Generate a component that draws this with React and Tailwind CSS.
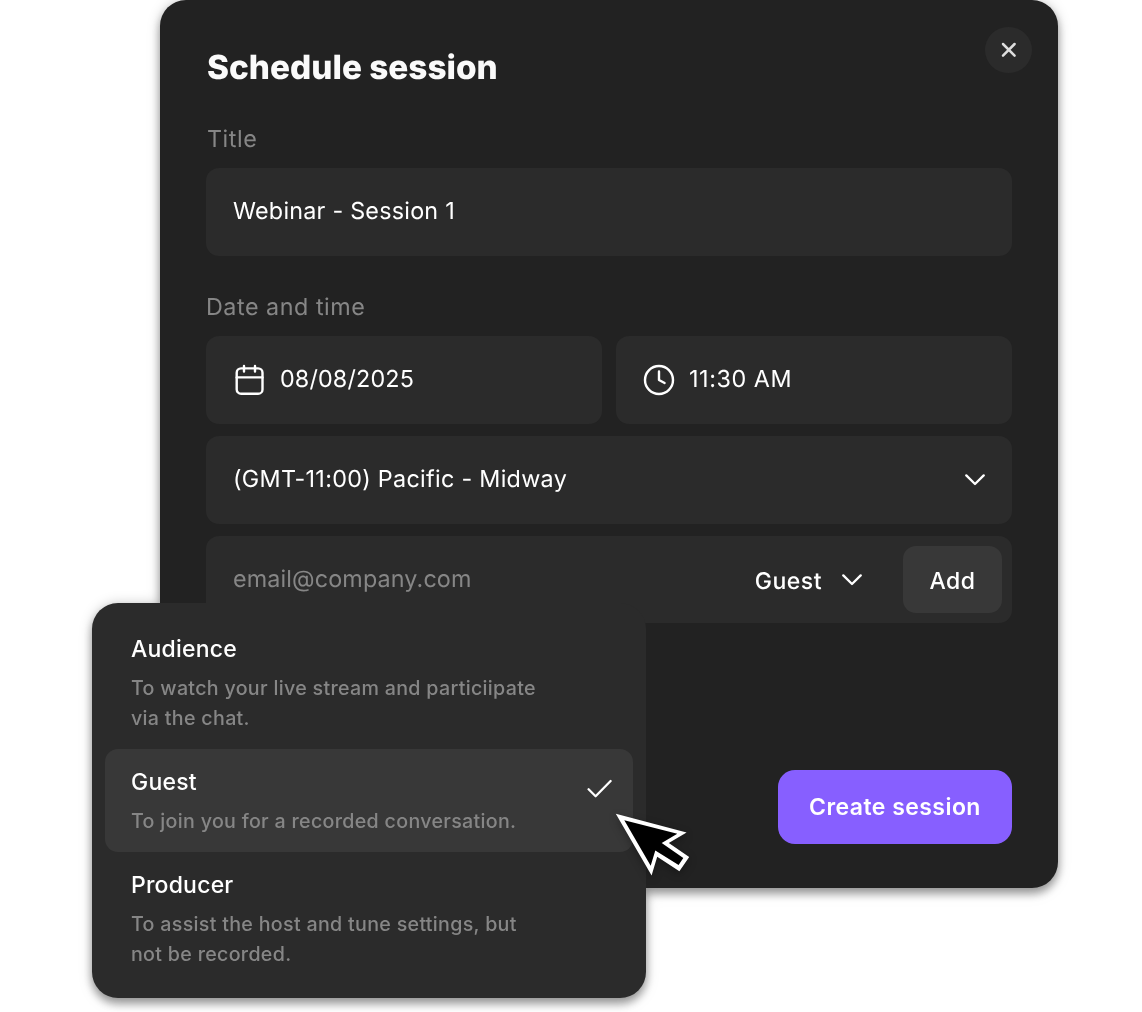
import React, { useState } from 'react'

const ROLES = [
  { name: 'Audience', lines: ['To watch your live stream and particiipate', 'via the chat.'] },
  { name: 'Guest', lines: ['To join you for a recorded conversation.'] },
  { name: 'Producer', lines: ['To assist the host and tune settings, but', 'not be recorded.'] },
]

function CloseIcon() {
  return (
    <svg width="16" height="16" viewBox="0 0 16 16" fill="none" stroke="#dedede" strokeWidth="2.5" strokeLinecap="round">
      <path d="M2 2 13.6 13.6M13.6 2 2 13.6" />
    </svg>
  )
}

function CalendarIcon() {
  return (
    <svg width="30" height="32" viewBox="0 0 30 32" fill="none" stroke="#fff" strokeWidth="2.4" strokeLinecap="round">
      <rect x="1.7" y="4.4" width="25.8" height="25.4" rx="4.4" />
      <path d="M1.7 13.4H27.5M9 2V7.6M20 2V7.6" />
    </svg>
  )
}

function ClockIcon() {
  return (
    <svg width="32" height="32" viewBox="0 0 32 32" fill="none" stroke="#fff" strokeWidth="2.4" strokeLinecap="round" strokeLinejoin="round">
      <circle cx="16" cy="16" r="14" />
      <path d="M16 7.4V16L21.6 19" />
    </svg>
  )
}

function ChevronIcon() {
  return (
    <svg width="20" height="12" viewBox="0 0 20 12" fill="none" stroke="#fff" strokeWidth="2.3" strokeLinecap="round" strokeLinejoin="round">
      <path d="M1.3 1.4 10 10 18.7 1.4" />
    </svg>
  )
}

function CheckIcon() {
  return (
    <svg width="26" height="20" viewBox="0 0 26 20" fill="none" stroke="#fff" strokeWidth="2.3" strokeLinecap="round" strokeLinejoin="round">
      <path d="M1.6 10.3 8.6 17.2 23.6 2" />
    </svg>
  )
}

function Cursor() {
  return (
    <svg className="absolute left-[610px] top-[808px] drop-shadow-[0_3px_4px_rgba(0,0,0,0.3)]" width="84" height="74" viewBox="0 0 84 74">
      <path fill="#fff" d="M5.8 5.8 76.6 24.6 58.8 35 79.2 49 69.4 63.2 47.2 48.8 41.6 67.6Z" />
      <path fill="#000" d="M14.3 12.3 67.3 25.7 51.7 35 73.3 50 68.6 57 45.3 42.4 40.7 57.8Z" />
    </svg>
  )
}

function Menu({ value, onSelect }) {
  return (
    <div className="absolute left-[92px] top-[603px] w-[554px] rounded-[26px] bg-[#2b2b2b] p-[13px]">
      {ROLES.map(role => (
        <button
          key={role.name}
          onClick={() => onSelect(role.name)}
          className={`flex w-full items-start justify-between rounded-[13px] pt-[17px] pr-5 pb-4 pl-[26px] text-left ${role.name === value ? 'bg-[#383838]' : ''}`}
        >
          <span>
            <span className="block text-[23px] leading-[32px] font-medium tracking-[0.2px] text-white">{role.name}</span>
            <span className="mt-2 block text-[19.67px] leading-[30px] font-[450] tracking-[0.3px] text-[#868686]">
              {role.lines.map(line => (
                <span key={line} className="block whitespace-nowrap">{line}</span>
              ))}
            </span>
          </span>
          {role.name === value && <span className="mt-[13px]"><CheckIcon /></span>}
        </button>
      ))}
    </div>
  )
}

export default function App() {
  const [role, setRole] = useState('Guest')

  return (
    <div className="relative h-[1012px] w-[1142px] overflow-hidden bg-white font-['Inter',sans-serif] text-[23.33px] leading-[33px] text-white [font-optical-sizing:none] [text-rendering:geometricPrecision]">
      {/* Modal and menu share one shadow */}
      <div className="h-full [filter:drop-shadow(0_6px_4px_rgba(0,0,0,0.32))_drop-shadow(0_0_6px_rgba(0,0,0,0.2))]">
        <div className="ml-[160px] flex h-[887.5px] w-[898px] flex-col rounded-[26px] bg-[#222] px-[46px]">
          {/* Header */}
          <div className="flex items-start justify-between pt-[27px]">
            <h1 className="mt-[18px] ml-px text-[33.33px] leading-[46px] font-[760] text-[#fafafa]">Schedule session</h1>
            <button className="-mr-5 flex h-[46px] w-[47px] items-center justify-center rounded-full bg-[#2b2b2b]">
              <CloseIcon />
            </button>
          </div>

          {/* Title */}
          <label className="mt-[31px] ml-px text-[23.33px] font-[420] tracking-[0.55px] text-[#868686]">Title</label>
          <div className="mt-[13px] flex h-[88px] items-center rounded-[13px] bg-[#2b2b2b] px-[27px] pb-[3px] font-[390] tracking-[0.23px]">
            Webinar - Session 1
          </div>

          {/* Date and time */}
          <label className="mt-[34px] text-[23.33px] font-[420] tracking-[0.52px] text-[#868686]">Date and time</label>
          <div className="mt-[13px] grid grid-cols-2 gap-[14px] font-[390]">
            <div className="flex h-[88px] items-center gap-[15px] rounded-[13px] bg-[#2b2b2b] pl-[29px]">
              <CalendarIcon />
              <span className="pb-[3px] tracking-[0.15px]">08/08/2025</span>
            </div>
            <div className="flex h-[88px] items-center gap-[14px] rounded-[13px] bg-[#2b2b2b] pl-[27px]">
              <ClockIcon />
              <span className="pb-[3px] tracking-[0.58px]">11:30 AM</span>
            </div>
          </div>
          <div className="mt-3 flex h-[88px] items-center justify-between rounded-[13px] bg-[#2b2b2b] px-[27px] font-[390] tracking-[0.3px]">
            <span className="pb-[3px]">(GMT-11:00) Pacific - Midway</span>
            <ChevronIcon />
          </div>

          {/* Invite */}
          <div className="mt-3 flex h-[87px] items-center rounded-[13px] bg-[#2b2b2b] pr-[10px] pl-[27px]">
            <span className="pb-[2px] font-[390] tracking-[0.13px] text-[#868686]">email@company.com</span>
            <span className="ml-auto pt-[3px] text-[23px] font-medium tracking-[0.5px]">{role}</span>
            <span className="mr-[41px] ml-[20px]"><ChevronIcon /></span>
            <button className="h-[67px] w-[99px] rounded-[13px] bg-[#383838] pt-[3px] text-[23px] font-medium tracking-[0.5px]">Add</button>
          </div>

          <button className="mt-auto mb-[43.5px] h-[74px] w-[234px] self-end rounded-[17px] bg-[#875fff] pt-px text-[23px] font-[570] tracking-[0.45px]">
            Create session
          </button>
        </div>

        <Menu value={role} onSelect={setRole} />
      </div>
      <Cursor />
    </div>
  )
}
